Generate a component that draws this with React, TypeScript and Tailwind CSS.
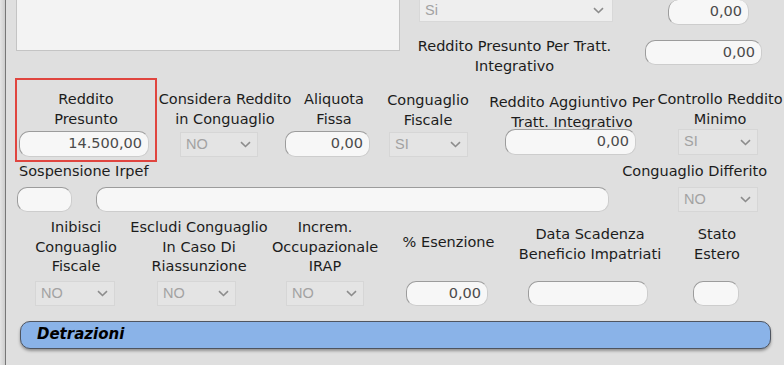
import React from "react";

// campo numerico arrotondato
const Field: React.FC<{ className?: string; value?: string }> = ({ className = "", value = "" }) => (
  <div
    className={`flex items-center justify-end rounded-[10px] border border-t-[#9c9c9c] border-l-[#9c9c9c] border-r-[#cdcdcd] border-b-[#cdcdcd] bg-[#f7f7f7] pr-[6px] text-[#4a4a4a] ${className}`}
  >
    {value}
  </div>
);

// select disabilitata
const Select: React.FC<{ className?: string; value: string; light?: boolean }> = ({ className = "", value, light }) => (
  <div
    className={`flex items-center justify-between border pl-[5px] pr-[6px] font-['Liberation_Sans',Arial,sans-serif] text-[#a2a2a2] ${
      light ? "bg-[#eeeeee] border-[#d8d8d8]" : "bg-[#e4e4e4] border-[#d6d6d6]"
    } ${className}`}
  >
    <span>{value}</span>
    <svg width="11" height="7" viewBox="0 0 11 7" fill="none">
      <path d="M1 1.2 L5.5 5.5 L10 1.2" stroke="#8c8c8c" strokeWidth="1.6" />
    </svg>
  </div>
);

const Label: React.FC<{ className?: string; children: React.ReactNode }> = ({ className = "", children }) => (
  <div className={`flex justify-center text-center whitespace-nowrap ${className}`}>
    <div>{children}</div>
  </div>
);

export default function App() {
  return (
    <div className="flex h-[365px] w-[784px] overflow-hidden bg-[#dfdfdf] font-['DejaVu_Sans',Verdana,sans-serif] text-[14.5px] leading-[19.5px] text-[#1c1c1c]">
      <div className="w-[5px] bg-gradient-to-r from-[#e4e4e4] to-[#cdcdcd]" />
      <div className="w-px bg-[#767676]" />

      <div className="flex flex-1 flex-col">
        {/* riga superiore */}
        <div className="flex h-[78px] items-start">
          <div className="ml-[10px] h-[51px] w-[384px] border border-t-0 border-[#c4c4c4] bg-[#f3f3f3]" />
          <div className="flex flex-col">
            <div className="flex h-[37px] items-start">
              <Select light value="Si" className="ml-[19px] h-[22px] w-[194px] border-t-0 pr-[8px]" />
              <Field value="0,00" className="ml-[55px] h-[25px] w-[81px] border-t-0" />
            </div>
            <div className="flex items-start">
              <Label className="ml-[6px] w-[217px]">
                Reddito Presunto Per Tratt.
                <br />
                Integrativo
              </Label>
              <Field value="0,00" className="ml-[22px] mt-[3px] h-[25px] w-[117px]" />
            </div>
          </div>
        </div>

        {/* reddito presunto */}
        <div className="flex h-[84px] items-start">
          <div className="ml-[9px] flex h-[84px] w-[142px] flex-col border-2 border-[#e0453f] pt-[10px]">
            <Label className="w-full">
              Reddito
              <br />
              Presunto
            </Label>
            <Field value="14.500,00" className="ml-[2px] mt-[2px] h-[26px] w-[130px]" />
          </div>
          <div className="flex flex-col pt-[12px]">
            <div className="flex h-[39px]">
              <Label className="w-[136px]">
                Considera Reddito
                <br />
                in Conguaglio
              </Label>
              <Label className="w-[82px]">
                Aliquota
                <br />
                Fissa
              </Label>
              <Label className="w-[106px] pt-[1px]">
                Conguaglio
                <br />
                Fiscale
              </Label>
              <Label className="w-[182px] pt-[3px]">
                Reddito Aggiuntivo Per
                <br />
                Tratt. Integrativo
              </Label>
              <Label className="w-[114px]">
                Controllo Reddito
                <br />
                Minimo
              </Label>
            </div>
            <div className="flex items-start">
              <Select value="NO" className="ml-[23px] mt-[3px] h-[25px] w-[78px]" />
              <Field value="0,00" className="ml-[27px] mt-[2px] h-[26px] w-[85px]" />
              <Select value="SI" className="ml-[19px] mt-[3px] h-[25px] w-[79px]" />
              <Field value="0,00" className="ml-[37px] h-[26px] w-[131px]" />
              <Select value="SI" className="ml-[42px] h-[26px] w-[80px]" />
            </div>
          </div>
        </div>

        {/* sospensione irpef */}
        <div className="flex h-[20px] justify-between pl-[13px] pr-[17px]">
          <span>Sospensione Irpef</span>
          <span>Conguaglio Differito</span>
        </div>
        <div className="mt-[5px] flex items-start">
          <Field className="ml-[11px] h-[25px] w-[55px]" />
          <Field className="ml-[24px] h-[25px] w-[513px]" />
          <Select value="NO" className="ml-[69px] h-[25px] w-[80px]" />
        </div>

        {/* opzioni conguaglio */}
        <div className="flex h-[69px] items-start">
          <Label className="ml-[10px] w-[120px] pt-[6px]">
            Inibisci
            <br />
            Conguaglio
            <br />
            Fiscale
          </Label>
          <Label className="w-[126px] pt-[6px]">
            Escludi Conguaglio
            <br />
            In Caso Di
            <br />
            Riassunzione
          </Label>
          <Label className="w-[126px] pt-[6px]">
            Increm.
            <br />
            Occupazionale
            <br />
            IRAP
          </Label>
          <Label className="w-[121px] pt-[21px]">% Esenzione</Label>
          <Label className="w-[162px] pt-[13px]">
            Data Scadenza
            <br />
            Beneficio Impatriati
          </Label>
          <Label className="w-[92px] pt-[13px]">
            Stato
            <br />
            Estero
          </Label>
        </div>
        <div className="flex items-start">
          <Select value="NO" className="ml-[29px] h-[25px] w-[80px]" />
          <Select value="NO" className="ml-[42px] h-[25px] w-[79px]" />
          <Select value="NO" className="ml-[50px] h-[25px] w-[78px]" />
          <Field value="0,00" className="ml-[42px] h-[25px] w-[82px]" />
          <Field className="ml-[40px] h-[25px] w-[120px]" />
          <Field className="ml-[45px] h-[25px] w-[46px]" />
        </div>

        {/* sezione detrazioni */}
        <div className="ml-[14px] mt-[15px] flex h-[28px] w-[751px] items-center rounded-[10px] border border-[#4f5560] bg-[#8ab3e8] pl-[16px] shadow-[0_2px_3px_rgba(0,0,0,0.35)]">
          <span className="text-[15px] font-bold italic text-black">Detrazioni</span>
        </div>
      </div>
    </div>
  );
}
